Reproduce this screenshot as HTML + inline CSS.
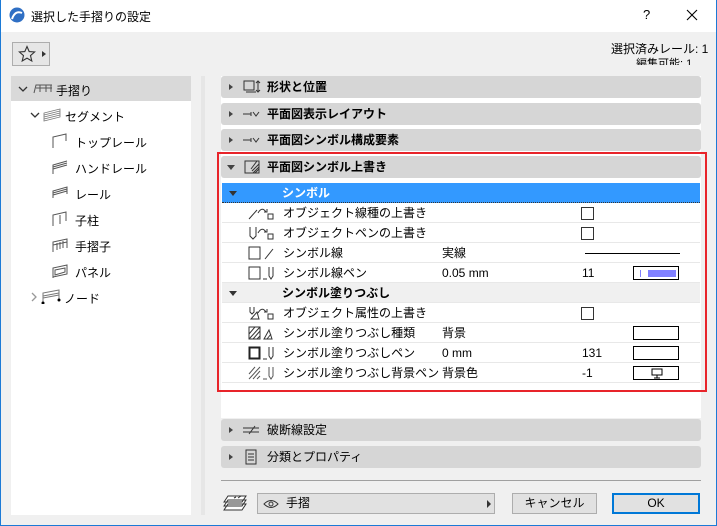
<!DOCTYPE html>
<html><head><meta charset="utf-8"><style>
*{margin:0;padding:0;box-sizing:border-box}
body{width:717px;height:526px;overflow:hidden;background:#f0f0f0;font-family:"Liberation Sans","Noto Sans CJK JP",sans-serif;font-size:12px;color:#000;position:relative}
.a{position:absolute}
.win{position:absolute;left:0;top:0;width:717px;height:526px;border:1px solid #1c7ad6;border-top:none}
.title{position:absolute;left:0;top:0;width:717px;height:32px;background:#fff}
.hdr{position:absolute;left:221px;width:480px;height:22px;background:#d6d6d6;border-radius:3px;font-weight:bold;line-height:22px}
.hdr .tri{position:absolute;left:8px;top:8px;width:0;height:0;border-left:4px solid #444;border-top:3px solid transparent;border-bottom:3px solid transparent}
.hdr .tri.d{left:6px;top:9px;border-left:4px solid transparent;border-right:4px solid transparent;border-top:5px solid #444;border-bottom:none}
.hdr span{position:absolute;left:46px}
.row{position:absolute;left:222px;width:478px;height:20px;border-bottom:1px solid #e8e8e8;background:#fff;line-height:21px}
.row .l{position:absolute;left:61px}
.row .v{position:absolute;left:220px}
.row .n{position:absolute;left:360px}
.cb{position:absolute;left:359px;top:4px;width:13px;height:13px;border:1px solid #333;background:#fff}
.box{position:absolute;left:411px;top:3px;width:46px;height:14px;border:1px solid #000;background:#fff}
.tree{position:absolute;font-size:12px}
.btn{position:absolute;top:493px;height:21px;border:1px solid #adadad;background:#e1e1e1;text-align:center;line-height:19px}
</style></head><body>
<div class="title"></div>
<svg class="a" style="left:9px;top:7px" width="16" height="16"><circle cx="8" cy="8" r="7.5" fill="#2f6fc4"/><path d="M3 12 Q6 3 13 6" stroke="#fff" stroke-width="2" fill="none"/></svg>
<div class="a" style="left:31px;top:8px;font-size:12px">選択した手摺りの設定</div>
<div class="a" style="left:643px;top:7px;font-size:13px">?</div>
<svg class="a" style="left:686px;top:9px" width="12" height="12"><path d="M1 1L11 11M11 1L1 11" stroke="#000" stroke-width="1.1"/></svg>
<div class="win"></div>

<div class="a" style="left:12px;top:42px;width:38px;height:24px;border:1px solid #adadad;background:#e6e6e6"></div>
<svg class="a" style="left:18px;top:45px" width="18" height="18"><path d="M9 1.5L11.2 6.6 16.6 7 12.5 10.6 13.8 16 9 13.1 4.2 16 5.5 10.6 1.4 7 6.8 6.6Z" fill="none" stroke="#333" stroke-width="1.1"/></svg>
<div class="a" style="left:42px;top:51px;border-left:4px solid #333;border-top:3px solid transparent;border-bottom:3px solid transparent"></div>

<div class="a" style="left:611px;top:40px;font-size:12px">選択済みレール: 1</div>
<div class="a" style="left:636px;top:55px;font-size:11px;height:10px;overflow:hidden">編集可能: 1</div>

<div class="a" style="left:11px;top:76px;width:180px;height:439px;background:#fff"></div>
<div class="a" style="left:11px;top:76px;width:180px;height:25px;background:#d9d9d9"></div>
<div class="a" style="left:201px;top:76px;width:4px;height:439px;background:#e6e6e6"></div>
<svg class="a" style="left:18px;top:86px" width="10" height="6"><path d="M1 1L5 5 9 1" stroke="#333" fill="none" stroke-width="1.3"/></svg>
<svg class="a" style="left:33px;top:82px" width="20" height="12"><path d="M1 11L3 3H19M3 6H19M7 3V10M13 3V10M18 3V10" stroke="#555" fill="none"/></svg>
<div class="tree" style="left:56px;top:82px">手摺り</div>
<svg class="a" style="left:30px;top:112px" width="10" height="6"><path d="M1 1L5 5 9 1" stroke="#333" fill="none" stroke-width="1.3"/></svg>
<svg class="a" style="left:43px;top:108px" width="18" height="14"><path d="M1 13V5L17 1V9Z M1 7L17 3M1 9L17 5M1 11L17 7" stroke="#777" fill="none" stroke-width=".8"/></svg>
<div class="tree" style="left:65px;top:108px">セグメント</div>
<svg class="a" style="left:52px;top:133px" width="16" height="16"><path d="M1 15V4L14 1V8" stroke="#555" fill="none"/></svg>
<div class="tree" style="left:75px;top:134px">トップレール</div>
<svg class="a" style="left:52px;top:159px" width="16" height="16"><path d="M1 15V6L15 2M1 8L15 4M1 10L15 6" stroke="#555" fill="none"/></svg>
<div class="tree" style="left:75px;top:160px">ハンドレール</div>
<svg class="a" style="left:52px;top:185px" width="16" height="16"><path d="M1 13V6L15 2V9M1 8L15 4M1 10L15 6" stroke="#555" fill="none"/></svg>
<div class="tree" style="left:75px;top:186px">レール</div>
<svg class="a" style="left:52px;top:211px" width="16" height="16"><path d="M1 15V4L14 1V10M8 4V13" stroke="#555" fill="none"/></svg>
<div class="tree" style="left:75px;top:212px">子柱</div>
<svg class="a" style="left:52px;top:237px" width="16" height="16"><path d="M1 15V5L15 2V11M1 8L15 5M5 6V13M8 5V12M11 4V11" stroke="#555" fill="none"/></svg>
<div class="tree" style="left:75px;top:238px">手摺子</div>
<svg class="a" style="left:52px;top:263px" width="16" height="16"><path d="M1 15V5L15 2V11L1 14M3 7L13 5V9L3 12Z" stroke="#555" fill="none"/></svg>
<div class="tree" style="left:75px;top:264px">パネル</div>
<svg class="a" style="left:31px;top:292px" width="6" height="10"><path d="M1 1L5 5 1 9" stroke="#999" fill="none" stroke-width="1.3"/></svg>
<svg class="a" style="left:41px;top:288px" width="20" height="16"><path d="M2 15V5L18 2V12M2 8L18 5M2 10L18 7" stroke="#777" fill="none"/><circle cx="2" cy="15" r="1.5"/><circle cx="18" cy="12" r="1.5"/></svg>
<div class="tree" style="left:64px;top:290px">ノード</div>

<div class="a" style="left:221px;top:76px;width:480px;height:342px;background:#fff"></div>
<div class="hdr" style="top:76px"><i class="tri"></i><svg class="a" style="left:22px;top:4px" width="18" height="14"><rect x="1" y="1" width="10" height="9" fill="none" stroke="#333"/><path d="M3 12H13M15 1V12M13 3L15 1 17 3M13 10L15 12 17 10" stroke="#333" fill="none"/></svg><span>形状と位置</span></div>
<div class="hdr" style="top:103px"><i class="tri"></i><svg class="a" style="left:22px;top:7px" width="18" height="8"><path d="M0 4H8M10 2L13 6 16 2M8 2V6" stroke="#333" fill="none"/></svg><span>平面図表示レイアウト</span></div>
<div class="hdr" style="top:129px"><i class="tri"></i><svg class="a" style="left:22px;top:7px" width="18" height="8"><path d="M0 4H8M10 2L13 6 16 2M8 2V6" stroke="#333" fill="none"/></svg><span>平面図シンボル構成要素</span></div>
<div class="hdr" style="top:156px"><i class="tri d"></i><svg class="a" style="left:22px;top:3px" width="18" height="16"><rect x="2" y="2" width="14" height="12" fill="none" stroke="#333"/><path d="M10 14L16 8M12 14L16 10M9 12L16 5M8 10L14 2" stroke="#333"/></svg><span>平面図シンボル上書き</span></div>

<div class="row" style="top:183px;background:#3399ff;color:#fff;font-weight:bold;border-bottom:1px dotted #333"><i class="a" style="left:7px;top:8px;border-left:4px solid transparent;border-right:4px solid transparent;border-top:5px solid #333"></i><span class="a" style="left:60px">シンボル</span></div>
<div class="row" style="top:203px"><svg class="a" style="left:26px;top:3px" width="30" height="15"><path d="M1 13L9 4M10 7Q14 0 18 6M16 6H19V3" stroke="#333" fill="none"/><rect x="20" y="8" width="5" height="5" fill="none" stroke="#333"/></svg><span class="l">オブジェクト線種の上書き</span><i class="cb"></i></div>
<div class="row" style="top:223px"><svg class="a" style="left:26px;top:3px" width="30" height="15"><path d="M2 1V10L5 13 8 10V1M10 7Q14 0 18 6M16 6H19V3" stroke="#333" fill="none"/><rect x="20" y="8" width="5" height="5" fill="none" stroke="#333"/></svg><span class="l">オブジェクトペンの上書き</span><i class="cb"></i></div>
<div class="row" style="top:243px"><svg class="a" style="left:26px;top:3px" width="30" height="15"><rect x="1" y="1" width="11" height="12" fill="none" stroke="#333"/><path d="M17 13L25 3" stroke="#333"/></svg><span class="l">シンボル線</span><span class="v">実線</span><i class="a" style="left:363px;top:10px;width:95px;height:1px;background:#000"></i></div>
<div class="row" style="top:263px"><svg class="a" style="left:26px;top:3px" width="30" height="15"><rect x="1" y="1" width="11" height="12" fill="none" stroke="#333"/><path d="M15 13H19M21 1V10L23 13 25 10V1" stroke="#333" fill="none"/></svg><span class="l">シンボル線ペン</span><span class="v">0.05 mm</span><span class="n">11</span><i class="box"><i class="a" style="left:6px;top:3px;width:1px;height:7px;background:#8080ff"></i><i class="a" style="left:14px;top:3px;width:28px;height:7px;background:#8080ff"></i></i></div>
<div class="row" style="top:283px;background:#f0f0f0;font-weight:bold"><i class="a" style="left:7px;top:8px;border-left:4px solid transparent;border-right:4px solid transparent;border-top:5px solid #333"></i><span class="a" style="left:60px">シンボル塗りつぶし</span></div>
<div class="row" style="top:303px"><svg class="a" style="left:26px;top:3px" width="30" height="15"><path d="M2 1V6L4 8 6 6V1M3 13L9 6 11 13ZM10 7Q14 0 18 6M16 6H19V3" stroke="#333" fill="none"/><rect x="20" y="8" width="5" height="5" fill="none" stroke="#333"/></svg><span class="l">オブジェクト属性の上書き</span><i class="cb"></i></div>
<div class="row" style="top:323px"><svg class="a" style="left:26px;top:3px" width="30" height="15"><rect x="1" y="1" width="11" height="12" fill="none" stroke="#333"/><path d="M1 8L7 1M1 13L12 1M5 13L12 5M9 13L12 10M16 13L21 4 24 13ZM19 13L23 8" stroke="#333" fill="none"/></svg><span class="l">シンボル塗りつぶし種類</span><span class="v">背景</span><i class="box"></i></div>
<div class="row" style="top:343px"><svg class="a" style="left:26px;top:3px" width="30" height="15"><rect x="1.5" y="1.5" width="10" height="11" fill="none" stroke="#222" stroke-width="2"/><path d="M15 13H19M21 1V10L23 13 25 10V1" stroke="#333" fill="none"/></svg><span class="l">シンボル塗りつぶしペン</span><span class="v">0 mm</span><span class="n">131</span><i class="box"></i></div>
<div class="row" style="top:363px"><svg class="a" style="left:26px;top:3px" width="30" height="15"><path d="M1 8L7 1M1 13L12 1M5 13L12 5M9 13L12 10M15 13H19M21 1V10L23 13 25 10V1" stroke="#555" fill="none"/></svg><span class="l">シンボル塗りつぶし背景ペン</span><span class="v">背景色</span><span class="n">-1</span><i class="box"><svg class="a" style="left:17px;top:1px" width="12" height="11"><rect x="1" y="1" width="10" height="6" fill="none" stroke="#000"/><path d="M6 7V10M3 10H9" stroke="#000"/></svg></i></div>
<div class="a" style="left:217px;top:152px;width:490px;height:240px;border:2px solid #e8242a"></div>

<div class="hdr" style="top:419px;font-weight:normal"><i class="tri"></i><svg class="a" style="left:22px;top:6px" width="18" height="10"><path d="M0 3H16M0 7H16M6 9L12 1" stroke="#333"/></svg><span>破断線設定</span></div>
<div class="hdr" style="top:446px;font-weight:normal"><i class="tri"></i><svg class="a" style="left:24px;top:3px" width="12" height="16"><rect x="1" y="1" width="10" height="14" fill="none" stroke="#333"/><path d="M3 5H9M3 8H9M3 11H9" stroke="#333"/></svg><span>分類とプロパティ</span></div>
<div class="a" style="left:221px;top:480px;width:480px;height:1px;background:#a0a0a0"></div>

<svg class="a" style="left:222px;top:494px" width="26" height="18"><path d="M2 16L6 10H24L20 16ZM2 12L6 6H24L20 12ZM2 8L6 2H24L20 8Z" fill="#fff" stroke="#333"/><path d="M12 4L14 3M16 4L19 2" stroke="#333"/></svg>
<div class="btn" style="left:257px;width:238px;text-align:left;padding-left:28px">手摺</div>
<svg class="a" style="left:263px;top:499px" width="16" height="10"><path d="M1 5Q8 -2 15 5Q8 12 1 5Z" fill="none" stroke="#333"/><circle cx="8" cy="5" r="2" fill="none" stroke="#333"/></svg>
<div class="a" style="left:487px;top:500px;border-left:4px solid #333;border-top:4px solid transparent;border-bottom:4px solid transparent"></div>
<div class="btn" style="left:512px;width:85px">キャンセル</div>
<div class="btn" style="left:612px;width:88px;border:2px solid #0078d7;line-height:17px">OK</div>
</body></html>
